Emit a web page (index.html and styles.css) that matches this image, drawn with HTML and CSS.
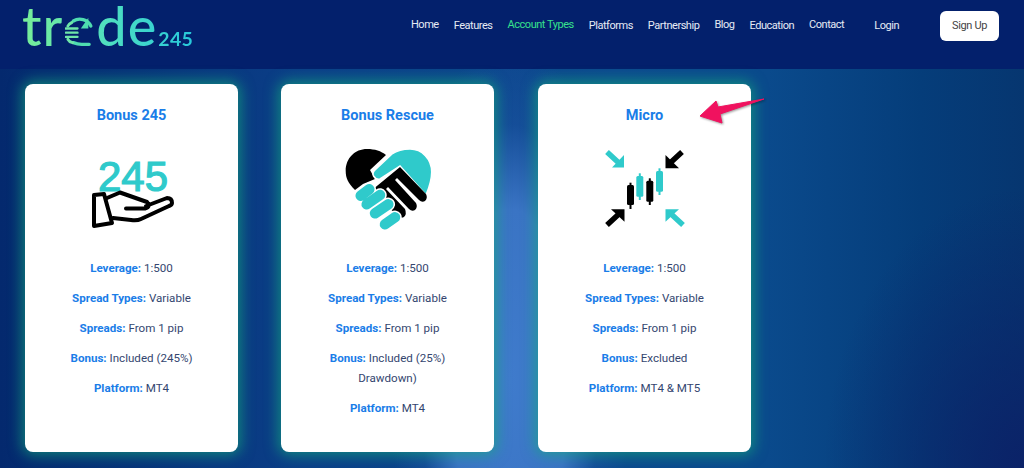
FILE: index.html
```html
<!DOCTYPE html>
<html lang="en">
<head>
<meta charset="utf-8">
<title>Trade245 Account Types</title>
<link rel="stylesheet" href="styles.css">
</head>
<body>
<header class="topbar">
  <a class="logo" href="#"><span class="logo-word">tr<svg class="logo-a" viewBox="0 0 36 36" aria-hidden="true"><path d="M31 12A15 15 0 0 0 10 6M10 32Q15 34 20 34H29" fill="none" stroke="#4fdcb0" stroke-width="4" stroke-linecap="round"/><path d="M28 2V15H19Z" fill="#4fdcb0"/><path d="M1 15H15M1 20H15M1 25H15" stroke="#6fe6a8" stroke-width="2.800" stroke-linecap="round"/><path d="M8 8Q4 10 3.500 12M3.500 28Q5 31 9 32" fill="none" stroke="#6fe6a8" stroke-width="3.600" stroke-linecap="round"/></svg>de</span><span class="logo-num">245</span></a>
  <nav class="nav">
    <a class="nav-link" href="#">Home</a>
    <a class="nav-link low" href="#">Features</a>
    <a class="nav-link active" href="#">Account Types</a>
    <a class="nav-link low" href="#">Platforms</a>
    <a class="nav-link low" href="#">Partnership</a>
    <a class="nav-link" href="#">Blog</a>
    <a class="nav-link low" href="#">Education</a>
    <a class="nav-link" href="#">Contact</a>
    <a class="nav-link login low" href="#">Login</a>
    <a class="signup" href="#">Sign Up</a>
  </nav>
</header>
<main class="stage">
  <section class="cards">
    <article class="card">
      <h2 class="card-title">Bonus 245</h2>
      <div class="card-icon">
        <svg width="92" height="84" viewBox="0 0 92 84" aria-hidden="true">
          <text x="47" y="43" class="icon-num" text-anchor="middle">245</text>
          <path d="M8 47L18 46L26 75L8 78Z" fill="none" stroke="#000" stroke-width="4" stroke-linejoin="round"/>
          <path d="M21 50L34 44.500L61 54Q65 59 59 60.500H40M60 58L81 50Q86 50 86 55Q86 57 83 58L55 71Q51 73 45 72L27 70" fill="none" stroke="#000" stroke-width="4" stroke-linecap="round" stroke-linejoin="round"/>
        </svg>
      </div>
      <p class="spec"><b>Leverage:</b> 1:500</p>
      <p class="spec"><b>Spread Types:</b> Variable</p>
      <p class="spec"><b>Spreads:</b> From 1 pip</p>
      <p class="spec"><b>Bonus:</b> Included (245%)</p>
      <p class="spec"><b>Platform:</b> MT4</p>
    </article>
    <article class="card">
      <h2 class="card-title">Bonus Rescue</h2>
      <div class="card-icon">
        <svg width="92" height="84" viewBox="0 0 92 84" aria-hidden="true">
          <path d="M13 42C6 35 3.700 30 3.700 23C3.700 10 13 1 25 1C33 1 39 3 44 7L28 22L33 31L21 36Z" fill="#000"/>
          <path d="M38 31Q34 32 31.500 28Q30 25 33 22L50 6C55 2.500 61 1 68 1C80 1 89.700 11 89.700 24C89.700 32 87 40 84 47L58 18Z" fill="#2fcacb" stroke="#fff" stroke-width="1.500"/>
          <path d="M41 33L58 19L84 46Q86 50 83 53Q80 55 77 52L55 30L53 32L74 55Q76 59 73 62Q70 64 67 61L46 39L44 41L63 61Q65 66 62 69Q59 71 56 68L45 58L30 42Z" fill="#000"/>
          <g fill="none" stroke="#fff" stroke-width="13.500" stroke-linecap="round">
            <path d="M18.700 47.700L27.300 41.300M24.700 56.300L38 47M33 65.300L46.300 56.300M43 76.300L53 69.300"/>
          </g>
          <g fill="none" stroke="#2fcacb" stroke-width="10.500" stroke-linecap="round">
            <path d="M18.700 47.700L27.300 41.300M24.700 56.300L38 47M33 65.300L46.300 56.300M43 76.300L53 69.300"/>
          </g>
        </svg>
      </div>
      <p class="spec"><b>Leverage:</b> 1:500</p>
      <p class="spec"><b>Spread Types:</b> Variable</p>
      <p class="spec"><b>Spreads:</b> From 1 pip</p>
      <p class="spec"><b>Bonus:</b> Included (25%) Drawdown)</p>
      <p class="spec"><b>Platform:</b> MT4</p>
    </article>
    <article class="card">
      <h2 class="card-title">Micro</h2>
      <div class="card-icon">
        <svg width="92" height="84" viewBox="0 0 92 84" aria-hidden="true">
          <g fill="#2fcacb">
            <path d="M25 19.500V7L13 19.500Z"/>
            <path d="M66.500 61.300H80L66.500 73.700Z"/>
            <rect x="39.800" y="25.300" width="2" height="26.700"/><rect x="37.300" y="28" width="7" height="20.700" rx="1.500"/>
            <rect x="59.500" y="20.300" width="2" height="26.700"/><rect x="57" y="23" width="7" height="20.700" rx="1.500"/>
          </g>
          <path d="M8 4L21 16M84 77L71 65" stroke="#2fcacb" stroke-width="5.500" fill="none"/>
          <g fill="#000">
            <path d="M66.500 20.300V7L80 20.300Z"/>
            <path d="M25.500 61.300H12L25.500 73.700Z"/>
            <rect x="30.500" y="34.700" width="2" height="26.300"/><rect x="28" y="37" width="7" height="20" rx="1.500"/>
            <rect x="49.800" y="30.300" width="2" height="26.700"/><rect x="47.300" y="32.700" width="7" height="21" rx="1.500"/>
          </g>
          <path d="M83 4L70 16M8 77L21 65" stroke="#000" stroke-width="5.500" fill="none"/>
        </svg>
      </div>
      <p class="spec"><b>Leverage:</b> 1:500</p>
      <p class="spec"><b>Spread Types:</b> Variable</p>
      <p class="spec"><b>Spreads:</b> From 1 pip</p>
      <p class="spec"><b>Bonus:</b> Excluded</p>
      <p class="spec"><b>Platform:</b> MT4 &amp; MT5</p>
    </article>
  </section>
  <svg class="pointer" width="70" height="30" viewBox="0 0 70 30" aria-hidden="true">
    <path d="M2 19L18 4L20 10L66 2L22 17L24 26Z" fill="#f0125f" stroke="#f0125f" stroke-width="1" stroke-linejoin="round"/>
  </svg>
</main>
</body>
</html>
```
FILE: styles.css
```css
* { box-sizing: border-box; }
html, body { margin: 0; height: 100%; overflow: hidden; }
body {
  font-family: Roboto, "Liberation Sans", sans-serif;
  background: #0a3f88;
}
a { text-decoration: none; }

.topbar {
  height: 69px;
  background: #03206c;
  display: flex;
  justify-content: space-between;
  padding: 0 25px 0 22px;
}
.logo {
  display: flex;
  align-items: flex-start;
  font-family: Lato, "Noto Sans", sans-serif;
  background: linear-gradient(90deg, #78ee98 0%, #4fdfc0 50%, #27c9dc 100%);
  -webkit-background-clip: text;
  background-clip: text;
  color: transparent;
  height: 60px;
}
.logo-word {
  font-size: 54px;
  font-weight: 500;
  line-height: 40px;
  margin-top: 6px;
  display: flex;
  align-items: flex-end;
  letter-spacing: 1px;
}
.logo-a {
  width: 30px;
  height: 30px;
  margin: 0 1px 0 2px;
  flex: none;
}
.logo-num {
  font-size: 19.500px;
  font-weight: 700;
  letter-spacing: .3px;
  margin: 29px 0 0 1px;
  line-height: 20px;
}
.nav {
  display: flex;
  align-items: flex-start;
  gap: 15px;
  padding-top: 11px;
}
.nav-link {
  color: #e6ebf5;
  font-size: 11px;
  letter-spacing: -.47px;
  line-height: 28px;
}
.nav-link.low { line-height: 30px; }
.nav-link.active { color: #37e08c; }
.nav-link.login { margin: 0 26px 0 15px; }
.signup {
  width: 59px;
  height: 30px;
  background: #fff;
  border-radius: 6px;
  color: #444;
  font-size: 11px;
  letter-spacing: -.35px;
  line-height: 30px;
  text-align: center;
}

.stage {
  position: relative;
  height: 399px;
  padding: 15px 0 0 25px;
  background:
    radial-gradient(ellipse 120px 340px at 510px 310px, #3f7bcc 0%, #3a74c4 50%, rgba(30,85,165,.5) 75%, rgba(20,70,140,0) 100%),
    radial-gradient(ellipse 200px 280px at 100% 100%, #0b2268 0%, rgba(11,34,104,0) 100%),
    linear-gradient(90deg, #04296e 0%, #0b3f88 30%, #0c4a8e 60%, #0a4a8c 75%, #053d7a 90%, #063670 100%);
}
.cards {
  display: flex;
  gap: 43px;
  align-items: flex-start;
}
.card {
  width: 213px;
  height: 368px;
  background: #fff;
  border-radius: 8px;
  box-shadow: 0 0 14px 3px rgba(20,175,125,.65);
  padding: 23px 20px 0;
  text-align: center;
}
.card:last-child { margin-left: 1px; }
.card-title {
  margin: 0;
  font-size: 14.500px;
  font-weight: 700;
  line-height: 18px;
  color: #1a7de8;
}
.card-icon {
  height: 84px;
  margin-top: 23px;
  margin-bottom: 26px;
  display: flex;
  justify-content: center;
}
.icon-num {
  font-family: "Liberation Sans", sans-serif;
  font-size: 42px;
  fill: #2fcacb;
  stroke: #2fcacb;
  stroke-width: 1.200px;
}
.spec {
  margin: 0 0 10px;
  font-size: 11.600px;
  line-height: 20px;
  color: #34466f;
}
.spec b {
  font-weight: 700;
  color: #1a7de8;
}
.pointer {
  position: absolute;
  left: 698px;
  top: 28px;
  filter: drop-shadow(1px 1px 1px rgba(0,0,0,.4));
}
```
